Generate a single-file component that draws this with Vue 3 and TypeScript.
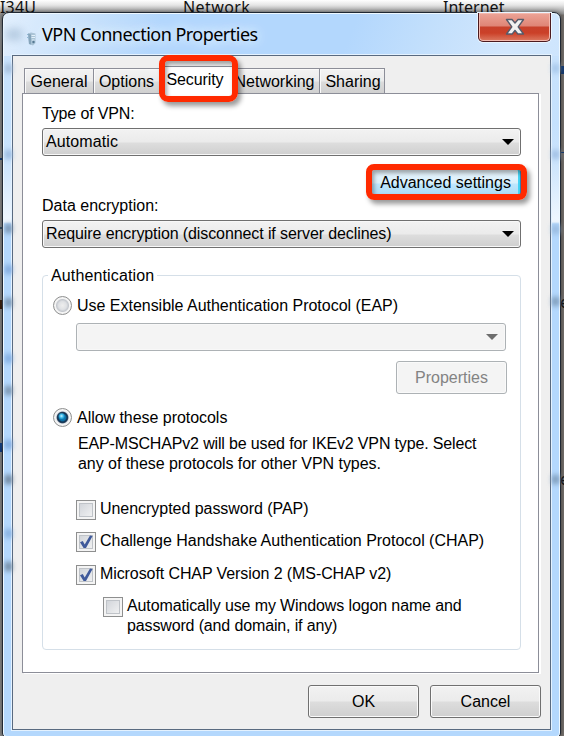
<script setup lang="ts">
import { ref } from 'vue'

const tabs = ['General', 'Options', 'Security', 'Networking', 'Sharing']
const activeTab = ref('Security')
const authMode = ref<'eap' | 'protocols'>('protocols')

interface Protocol {
  id: string
  label: string
  checked: boolean
}
const protocols = ref<Protocol[]>([
  { id: 'pap', label: 'Unencrypted password (PAP)', checked: false },
  { id: 'chap', label: 'Challenge Handshake Authentication Protocol (CHAP)', checked: true },
  { id: 'mschap', label: 'Microsoft CHAP Version 2 (MS-CHAP v2)', checked: true },
])
const autoLogon = ref(false)

// Blurred spots of the desktop seen through the glass frame
const leftSmudges = [
  { y: 70, c: '#a3bcd9' }, { y: 156, c: '#99b9df' }, { y: 230, c: '#7691ae' },
  { y: 271, c: '#7fa8dc' }, { y: 304, c: '#7891ab' }, { y: 360, c: '#7fabe0' },
  { y: 392, c: '#7891ab' }, { y: 446, c: '#80a9dc' }, { y: 481, c: '#6c8299' },
  { y: 535, c: '#85afe0' }, { y: 568, c: '#70889f' },
]
const rightSmudges = [
  { y: 70, c: '#a6c6e9' }, { y: 156, c: '#9fbfe3' }, { y: 231, c: '#98b9dd' },
  { y: 303, c: '#7d9bb9' }, { y: 481, c: '#7d9bb9' },
]
</script>

<template>
  <div class="desktop">
    <div class="behind">
      <span class="b b1">I34U</span>
      <span class="b b2">Network</span>
      <span class="b b3">Internet</span>
      <i class="edge e1"></i><i class="edge e2"></i><i class="edge e3"></i><i class="edge e4"></i>
      <i class="edge e5"></i><i class="edge e6"></i>
      <span class="b r1">e</span>
      <span class="b r2">e</span>
    </div>

    <div class="window">
      <i v-for="s in leftSmudges" :key="'l' + s.y" class="smudge left" :style="{ top: s.y - 19 + 'px', background: s.c }"></i>
      <i v-for="s in rightSmudges" :key="'r' + s.y" class="smudge right" :style="{ top: s.y - 19 + 'px', background: s.c }"></i>

      <header class="titlebar">
        <i class="title-shade"></i>
        <svg class="app-icon" width="10" height="14" viewBox="0 0 10 14">
          <path d="M1 1.5 4 .5 8.5 1.5V11L6 13.5 2 12Z" fill="#a9c3d6" />
          <path d="M1 1.5 4 2.5V12.5L2 12Z" fill="#86a5bb" />
          <path d="M4.5 3.5H8M4.5 5.5H8M5 8H7.5" stroke="#e2f0fa" />
          <circle cx="6.5" cy="10" r="1.2" fill="#537892" />
          <path d="M0 2 1.5 3.5M0 5 1.5 6.5" stroke="#8fb9d6" />
        </svg>
        <h1>VPN Connection Properties</h1>
        <button class="close" aria-label="Close">
          <svg width="20" height="18" viewBox="0 0 20 18">
            <path d="M1.5 1.5H7L10 5 13 1.5H18.5L13.2 8.8 18.5 16H12.8L10 12.4 7.2 16H1.5L6.8 8.8Z" fill="#f1f1f1" stroke="#555b6b" stroke-width="1.4" stroke-linejoin="round" />
          </svg>
        </button>
      </header>

      <main class="client">
        <nav class="tabs">
          <button v-for="t in tabs" :key="t" class="tab" :class="[t.toLowerCase(), { active: t === activeTab }]" @click="activeTab = t">
            <span>{{ t }}</span>
          </button>
          <i class="mark mark-tab"></i>
        </nav>

        <section class="panel">
          <label class="caption c-type">Type of VPN:</label>
          <div class="select"><span class="t-auto">Automatic</span><i class="arrow"></i></div>

          <div class="adv-row">
            <button class="advanced"><span>Advanced settings</span></button>
            <i class="mark mark-adv"></i>
          </div>

          <label class="caption c-data">Data encryption:</label>
          <div class="select"><span class="t-req">Require encryption (disconnect if server declines)</span><i class="arrow"></i></div>

          <div class="group">
            <div class="legend"><span>Authentication</span></div>
            <div class="radio-row">
              <i class="radio" :class="{ on: authMode === 'eap' }"></i>
              <span class="t-eap">Use Extensible Authentication Protocol (EAP)</span>
            </div>
            <div class="select disabled"><i class="arrow"></i></div>
            <button class="btn props" disabled><span>Properties</span></button>
            <div class="radio-row second">
              <i class="radio" :class="{ on: authMode === 'protocols' }"></i>
              <span class="t-allow">Allow these protocols</span>
            </div>
            <p class="note">
              <span class="t-n1">EAP-MSCHAPv2 will be used for IKEv2 VPN type. Select</span><br />
              <span class="t-n2">any of these protocols for other VPN types.</span>
            </p>
            <div v-for="p in protocols" :key="p.id" class="check-row" :class="p.id" @click="p.checked = !p.checked">
              <i class="box"><svg v-if="p.checked" width="16" height="16" viewBox="0 0 16 16"><path d="M2 8.2 4.8 7 6.7 10.4 12 1.6 14.6 2 8 14H5.6Z" fill="#405a9b" /></svg></i>
              <span>{{ p.label }}</span>
            </div>
            <div class="check-row nested" @click="autoLogon = !autoLogon">
              <i class="box"></i>
              <p><span class="t-a1">Automatically use my Windows logon name and</span><br /><span class="t-a2">password (and domain, if any)</span></p>
            </div>
          </div>
        </section>

        <footer class="actions">
          <button class="btn"><span class="t-ok">OK</span></button>
          <button class="btn"><span>Cancel</span></button>
        </footer>
      </main>
    </div>
  </div>
</template>

<style>
body { margin: 0; overflow: hidden; }
</style>

<style scoped>
* { box-sizing: border-box; }
button { font: inherit; color: inherit; padding: 0; margin: 0; }
span { white-space: nowrap; }
.desktop {
  position: relative; width: 564px; height: 736px; overflow: hidden;
  padding: 12px 3px 0 2px;
  background: linear-gradient(#fff 0, #e6e6e6 5px, #8f8f8f 14px, transparent 15px), linear-gradient(90deg, #8b8b8b, #77736f);
  font: 16px/20px "Liberation Sans", Arial, sans-serif; color: #000;
}
.behind { position: absolute; inset: 0; }
.b { position: absolute; top: -3px; font: 16px/20px "Noto Sans", sans-serif; color: #111; }
.b1 { left: 0; letter-spacing: 0.2px; } .b2 { left: 183px; letter-spacing: 0.4px; } .b3 { left: 443px; }
.r1 { left: 560px; top: 292px; } .r2 { left: 560px; top: 469px; }
.edge { position: absolute; height: 2px; width: 3px; background: #123a73; }
.e1 { left: 0; top: 158px; } .e2 { left: 0; top: 227px; background: #31495f; } .e3 { left: 0; top: 300px; height: 9px; background: #3c1d08; }
.e4 { left: 0; top: 443px; height: 9px; background: #123f86; } .e5 { left: 561px; top: 66px; height: 8px; } .e6 { left: 561px; top: 152px; height: 1px; }

.window {
  position: relative; width: 559px; height: 726px; padding: 0 8px 0 9px;
  border: 1px solid #202833; border-radius: 7px 7px 5px 5px;
  box-shadow: inset 0 0 0 1px #eef8ff, 0 0 5px rgba(0,0,0,.5);
  background:
    linear-gradient(112deg, #e2effd 0, #c5e0fb 90px, #b3d7fd 150px, #b3d7fd 330px, #c2dffc 400px, #d2e7fd 480px, transparent 600px) 0 0 / 100% 43px no-repeat,
    linear-gradient(#c9e3fd 42px, #c5e1fd 110px, #cce4fc 150px, #f0f7fe 209px, #b4d8fd 211px, #b4d8fd 100%);
}
.smudge { position: absolute; width: 7px; height: 9px; filter: blur(2.5px); }
.smudge.left { left: 2px; } .smudge.right { right: 1px; }
.titlebar { height: 42px; display: flex; align-items: flex-start; position: relative; }
.title-shade { position: absolute; left: -6px; top: 16px; width: 16px; height: 11px; background: #a3bcd4; filter: blur(4px); opacity: .7; }
.app-icon { margin: 19px 0 0 15px; }
h1 {
  margin: 9px 0 0 5px; font: 18px/24px "Noto Sans", sans-serif; letter-spacing: -0.52px; white-space: nowrap;
  text-shadow: 0 0 8px #e8f4ff, 0 0 14px #e8f4ff;
}
.close {
  margin: 0 1px 0 auto; width: 73px; height: 29px; display: grid; place-items: center;
  border: 1px solid #4c1a1f; border-top: 0; border-radius: 0 0 5px 5px;
  background: linear-gradient(#eca497, #df8576 13px, #c8412b 14px, #cb4028 20px, #dc7a62);
  box-shadow: inset 0 0 0 1px #f3b9ae, 0 0 0 1px #eaf5ff;
}
.client {
  width: 539px; height: 675px; border: 1px solid #596a80; padding: 9px 10px 0 9px;
  background: #efefef; box-shadow: 0 0 0 1px #e4f2ff;
}
.tabs { position: relative; display: flex; height: 28px; padding-left: 2px; align-items: flex-end; }
.tab {
  height: 25px; border: 1px solid #8c8e98; border-bottom: 0; margin-right: -1px; flex: none;
  background: linear-gradient(#f3f3f3, #ebebeb 12px, #dcdcdc 13px, #d0d0d0);
  box-shadow: inset 1px 1px 0 #fafafa; display: grid; place-items: center; padding-top: 2px;
}
.general { width: 70px; } .options { width: 67px; } .security { width: 74px; } .networking { width: 88px; } .sharing { width: 66px; }
.tab.active { height: 28px; background: #fff; box-shadow: none; z-index: 1; margin-bottom: -1px; padding: 0 2px 2px 0; letter-spacing: -0.1px; }
.networking { padding-right: 3px; }
.sharing { padding-left: 2px; }
.mark { position: absolute; z-index: 3; border: 6px solid #ff2a00; pointer-events: none; box-shadow: 3px 4px 5px rgba(0,0,0,.4), inset 2px 3px 4px rgba(0,0,0,.35); }
.mark-tab { left: 137px; top: -10px; width: 79px; height: 47px; border-radius: 9px; }
.panel {
  width: 517px; height: 580px; border: 1px solid #8c8e98; background: #fff; padding: 10px 17px 0 19px;
  display: flex; flex-direction: column; box-shadow: 2px 1px 0 #fff;
}
.caption { height: 20px; flex: none; }
.c-type { letter-spacing: -0.15px; }
.select {
  height: 28px; flex: none; margin-top: 4px; border: 1px solid #707070; border-radius: 3px; padding: 0 6px 0 3px;
  display: flex; align-items: center; justify-content: space-between;
  background: linear-gradient(#f2f2f2, #ebebeb 13px, #dddddd 14px, #cfcfcf); box-shadow: inset 0 0 0 1px #f8f8f8;
}
.t-auto { letter-spacing: 0.1px; }
.t-req { letter-spacing: -0.1px; }
.arrow { margin-left: auto; border: 6px solid transparent; border-top-color: #000; border-bottom: 0; }
.adv-row { position: relative; height: 29px; margin-top: 12px; display: flex; justify-content: flex-end; flex: none; }
.advanced {
  width: 150px; border: 1px solid #3c7fb1; border-radius: 3px; padding-right: 1px;
  background: linear-gradient(#eaf6fd, #d9f0fc 14px, #bee6fd 15px, #a9dbf5); box-shadow: inset -1px 0 0 1px #45d4f5;
}
.mark-adv { right: -6px; top: -4px; width: 161px; height: 36px; border-radius: 8px; }
.c-data { margin-top: -1px; }
.group {
  position: relative; margin-top: 27px; height: 375px; flex: none; border: 1px solid #d5dfe8; border-radius: 4px;
  padding: 0 14px 0 10px; display: flex; flex-direction: column;
}
.legend { height: 20px; margin: -10px 0 0 -5px; letter-spacing: 0.13px; }
.legend span { display: inline-block; background: #fff; padding: 0 3px; }
.radio-row { display: flex; align-items: center; gap: 5px; height: 20px; margin-top: 9px; }
.radio-row span { position: relative; top: 1px; }
.radio {
  width: 19px; height: 19px; border-radius: 50%; border: 1px solid #8e8f8f;
  background: radial-gradient(circle at 8.5px 8.5px, #eeeeee 0, #dfe1e4 4px, #c4c8ce 6px, #f4f4f4 7px);
}
.radio.on {
  background:
    radial-gradient(circle at 7.5px 7px, #c9f2ff 0, rgba(70,195,240,.9) 1.8px, transparent 3.5px),
    radial-gradient(circle at 8.5px 8.5px, #118ac3 0, #0b6fa5 3.2px, #15304d 4.6px, #24405d 5.3px, #dfe3e8 6.3px, #f4f4f4 7px);
}
.t-eap { letter-spacing: -0.02px; }
.t-allow { letter-spacing: -0.04px; }
.disabled { margin: 8px 0 0 23px; border-color: #adb2b5; background: #f4f4f4; }
.disabled .arrow { border-top-color: #6d6d6d; margin-right: 1px; }
.btn {
  width: 111px; height: 33px; border: 1px solid #707070; border-radius: 3px; flex: none;
  background: linear-gradient(#f2f2f2, #ebebeb 15px, #dddddd 16px, #cfcfcf); box-shadow: inset 0 0 0 1px #fafafa;
}
.props { align-self: flex-end; margin: 10px -1px 0 0; border-color: #adb2b5; background: #f4f4f4; color: #838383; }
.radio-row.second { margin-top: 13px; }
.note { margin: 7px 0 0 25px; height: 40px; }
.t-n1 { letter-spacing: -0.155px; }
.t-n2 { letter-spacing: -0.05px; }
.check-row { display: flex; gap: 4px; height: 20px; margin: 26px 0 0 23px; flex: none; align-items: flex-start; }
.check-row > span { margin-top: -1px; }
.pap { letter-spacing: -0.04px; }
.chap { margin-top: 12px; letter-spacing: -0.02px; }
.mschap { margin-top: 13px; letter-spacing: -0.09px; }
.box { width: 20px; height: 20px; flex: none; border: 1px solid #8e8f8f; display: grid; place-items: center;
  background: linear-gradient(135deg, #cbcfd5, #f7f7f7) padding-box; box-shadow: inset 0 0 0 2px #f4f4f4, inset 0 0 0 3px #bfc3c8; }
.nested { margin: 12px 0 0 50px; }
.nested p { margin: -1px 0 0; }
.t-a1 { letter-spacing: -0.12px; }
.t-a2 { letter-spacing: -0.14px; }
.actions { display: flex; justify-content: flex-end; gap: 11px; margin: 12px -1px 0 0; }
</style>
